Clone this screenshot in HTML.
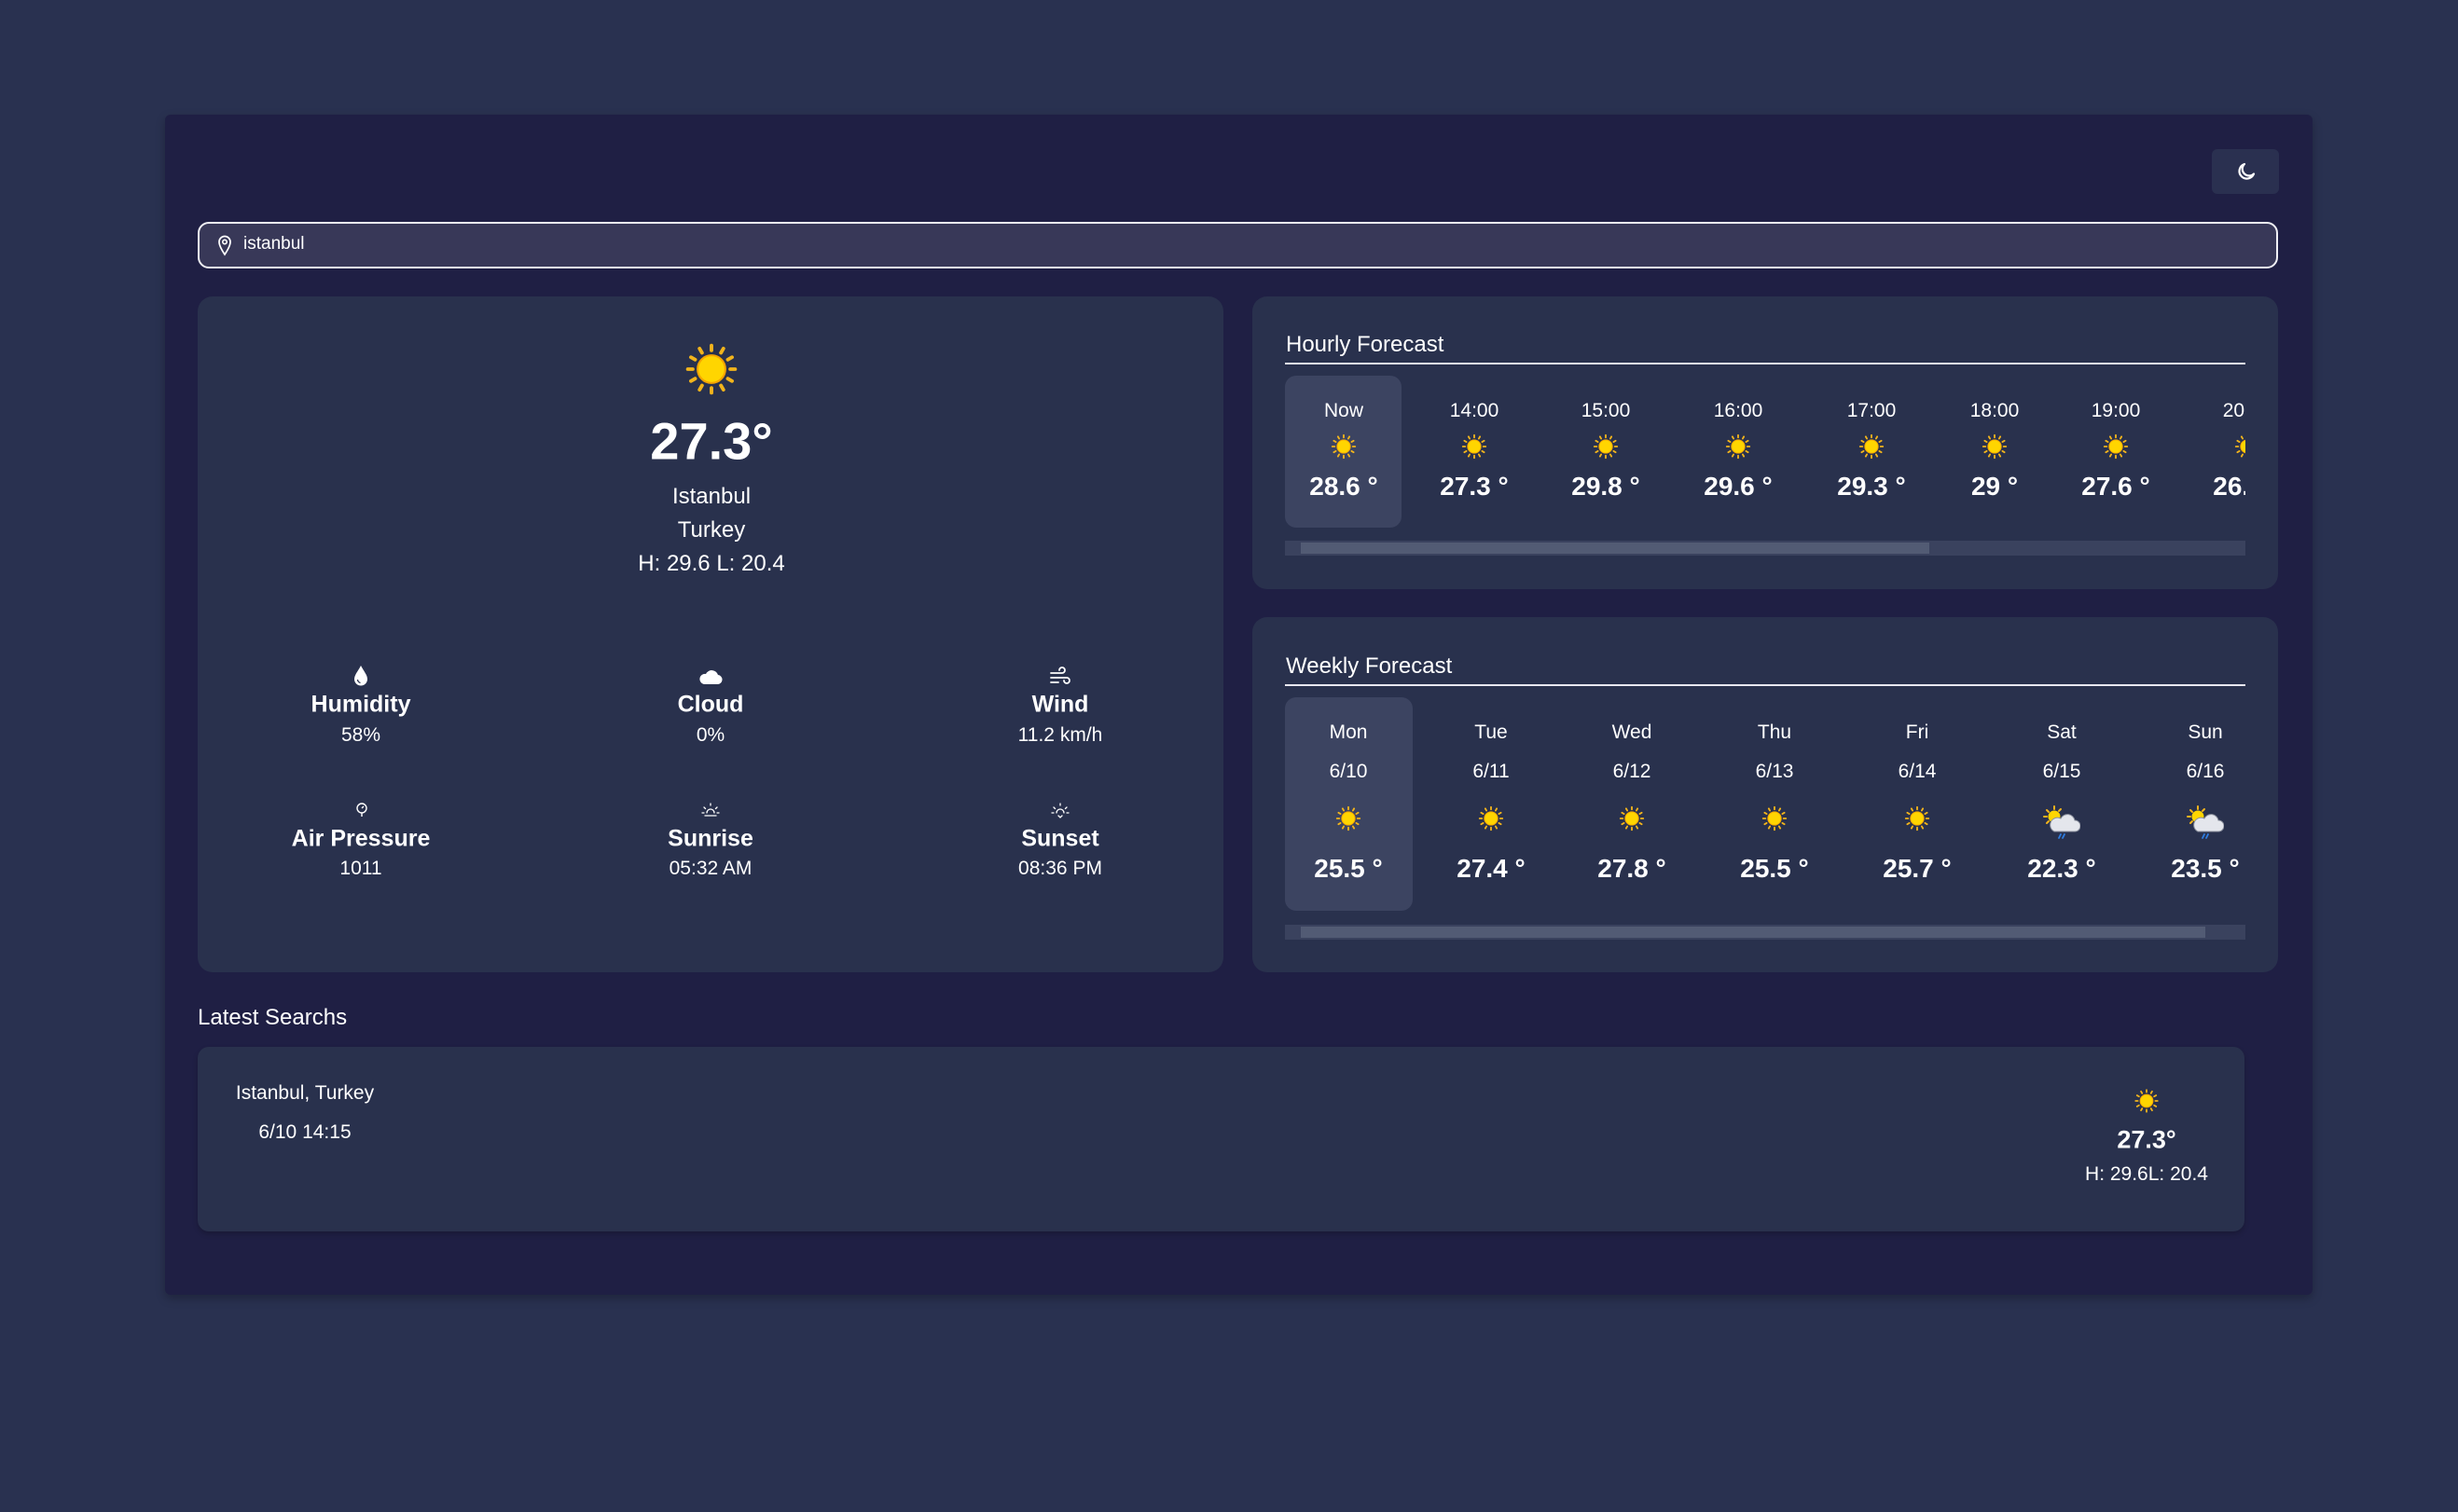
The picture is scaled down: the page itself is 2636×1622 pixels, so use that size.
<!DOCTYPE html>
<html><head><meta charset="utf-8"><style>
*{box-sizing:border-box;margin:0;padding:0}
html,body{width:2636px;height:1622px;overflow:hidden}
body{background:#293150;font-family:"Liberation Sans",sans-serif;color:#fff;position:relative}
.abs{position:absolute}
.c{position:absolute;transform:translate(-50%,-50%);white-space:nowrap;text-align:center}
.card{position:absolute;background:#29314d;border-radius:16px}
.t{font-size:21px}
.b{font-weight:bold}
</style></head><body>
<svg width="0" height="0" style="position:absolute">
<defs>
<symbol id="sun" viewBox="0 0 32 32">
<g stroke="#f2b41c" stroke-width="2.2" stroke-linecap="round">
<line x1="16" y1="1.5" x2="16" y2="4.5"/><line x1="16" y1="27.5" x2="16" y2="30.5"/>
<line x1="1.5" y1="16" x2="4.5" y2="16"/><line x1="27.5" y1="16" x2="30.5" y2="16"/>
<line x1="8.7" y1="3.4" x2="10.2" y2="6"/><line x1="21.8" y1="26" x2="23.3" y2="28.6"/>
<line x1="23.3" y1="3.4" x2="21.8" y2="6"/><line x1="10.2" y1="26" x2="8.7" y2="28.6"/>
<line x1="3.4" y1="8.7" x2="6" y2="10.2"/><line x1="26" y1="21.8" x2="28.6" y2="23.3"/>
<line x1="3.4" y1="23.3" x2="6" y2="21.8"/><line x1="26" y1="10.2" x2="28.6" y2="8.7"/>
</g>
<circle cx="16" cy="16" r="8.5" fill="#ffd500" stroke="#f5a500" stroke-width="1.2"/>
</symbol>
<symbol id="rain" viewBox="0 0 40 36">
<g stroke="#f2b41c" stroke-width="2" stroke-linecap="round">
<line x1="12" y1="1" x2="12" y2="4"/><line x1="4" y1="5" x2="6" y2="7"/><line x1="1" y1="12" x2="4" y2="12"/><line x1="4" y1="19" x2="6" y2="17"/><line x1="19" y1="4" x2="17" y2="6"/>
</g>
<circle cx="12" cy="12" r="6.5" fill="#ffd500"/>
<path d="M12 28 h22 a6 6 0 0 0 0-12 a8 8 0 0 0-15-2 a6 6 0 0 0-7 14z" fill="#e4e6ec" stroke="#8a8f9c" stroke-width="1"/>
<g stroke="#2f7de0" stroke-width="1.8" stroke-linecap="round"><line x1="19" y1="31" x2="17" y2="35"/><line x1="23" y1="31" x2="21" y2="35"/></g>
</symbol>
</defs></svg>

<div class="abs" style="left:177px;top:123px;width:2303px;height:1266px;background:#1f1f44;border-radius:6px;box-shadow:0 4px 10px rgba(0,0,0,.25)"></div>

<div class="abs" style="left:2372px;top:160px;width:72px;height:48px;background:#2a3050;border-radius:6px"></div>
<svg class="abs" style="left:2397px;top:172px" width="24" height="24" viewBox="0 0 24 24"><path d="M20 14.5A8 8 0 1 1 10 4a6.5 6.5 0 0 0 10 10.5z" fill="none" stroke="#fff" stroke-width="2.2" stroke-linejoin="round"/></svg>

<div class="abs" style="left:212px;top:238px;width:2231px;height:50px;background:#383858;border:2px solid #f0f0f5;border-radius:12px"></div>
<svg class="abs" style="left:233px;top:251px" width="16" height="24" viewBox="0 0 16 24"><path d="M8 22 C4 16 2 12 2 8.5 A6 6 0 0 1 14 8.5 C14 12 12 16 8 22z" fill="none" stroke="#fff" stroke-width="1.7"/><circle cx="8" cy="8.5" r="2.2" fill="none" stroke="#fff" stroke-width="1.6"/></svg>
<div class="abs" style="left:261px;top:251px;font-size:19px">istanbul</div>

<!-- left card -->
<div class="card" style="left:212px;top:318px;width:1100px;height:725px"></div>
<svg class="c" style="left:763px;top:396px" width="56" height="56"><use href="#sun"/></svg>
<div class="c b" style="left:763px;top:473px;font-size:56px">27.3°</div>
<div class="c" style="left:763px;top:533px;font-size:24px">Istanbul</div>
<div class="c" style="left:763px;top:569px;font-size:24px">Turkey</div>
<div class="c" style="left:763px;top:605px;font-size:24px">H: 29.6 L: 20.4</div>

<svg class="c" style="left:387px;top:725px" width="18" height="24" viewBox="0 0 18 24"><path d="M9 1 C6 7 2 11 2 15.5 A7 7 0 0 0 16 15.5 C16 11 12 7 9 1z" fill="#fff"/><path d="M5.5 16a4 4 0 0 0 3 3.5" stroke="#29314d" stroke-width="1.3" fill="none"/></svg>
<div class="c b" style="left:387px;top:756px;font-size:25px">Humidity</div>
<div class="c t" style="left:387px;top:789px">58%</div>
<svg class="c" style="left:762px;top:726px" width="26" height="20" viewBox="0 0 26 20"><path d="M6 18h14a5 5 0 0 0 1-10 a7 7 0 0 0-13-1 a5.5 5.5 0 0 0-2 11z" fill="#fff"/></svg>
<div class="c b" style="left:762px;top:756px;font-size:25px">Cloud</div>
<div class="c t" style="left:762px;top:789px">0%</div>
<svg class="c" style="left:1137px;top:726px" width="24" height="22" viewBox="0 0 24 22" fill="none" stroke="#fff" stroke-width="1.8" stroke-linecap="round"><path d="M2 7h12a3 3 0 1 0-3-3"/><path d="M2 12h17a3 3 0 1 1-3 3"/><path d="M2 17h8"/></svg>
<div class="c b" style="left:1137px;top:756px;font-size:25px">Wind</div>
<div class="c t" style="left:1137px;top:789px">11.2 km/h</div>

<svg class="c" style="left:388px;top:869px" width="14" height="16" viewBox="0 0 14 16" fill="none" stroke="#fff" stroke-width="1.4"><circle cx="7" cy="6" r="5"/><path d="M7 6l2-2M7 11v4"/></svg>
<div class="c b" style="left:387px;top:900px;font-size:25px">Air Pressure</div>
<div class="c t" style="left:387px;top:932px">1011</div>
<svg class="c" style="left:762px;top:869px" width="20" height="18" viewBox="0 0 20 18" fill="none" stroke="#fff" stroke-width="1.3" stroke-linecap="round"><path d="M6 12a4 4 0 0 1 8 0M10 2v2M3 6l1.5 1.5M17 6l-1.5 1.5M1 12h2M17 12h2M4 15h12"/></svg>
<div class="c b" style="left:762px;top:900px;font-size:25px">Sunrise</div>
<div class="c t" style="left:762px;top:932px">05:32 AM</div>
<svg class="c" style="left:1137px;top:869px" width="20" height="18" viewBox="0 0 20 18" fill="none" stroke="#fff" stroke-width="1.3" stroke-linecap="round"><path d="M6 12a4 4 0 0 1 8 0M10 2v2M3 6l1.5 1.5M17 6l-1.5 1.5M1 12h2M17 12h2M8 15l2 2 2-2"/></svg>
<div class="c b" style="left:1137px;top:900px;font-size:25px">Sunset</div>
<div class="c t" style="left:1137px;top:932px">08:36 PM</div>

<!-- hourly -->
<div class="card" style="left:1343px;top:318px;width:1100px;height:314px"></div>
<div class="abs" style="left:1379px;top:356px;font-size:24px">Hourly Forecast</div>
<div class="abs" style="left:1378px;top:389px;width:1030px;height:2px;background:#e8e8f0"></div>
<div class="abs" style="left:1378px;top:403px;width:125px;height:163px;background:#3c4461;border-radius:12px"></div>
<div class="abs" style="left:1378px;top:403px;width:1030px;height:163px;overflow:hidden">
<div style="position:relative;left:-1378px;top:-403px;width:2636px;height:600px">
<div class="c t" style="left:1441px;top:441px">Now</div><svg class="c" style="left:1441px;top:479px" width="27" height="27"><use href="#sun"/></svg><div class="c b" style="left:1441px;top:522px;font-size:28px">28.6 °</div>
<div class="c t" style="left:1581px;top:441px">14:00</div><svg class="c" style="left:1581px;top:479px" width="27" height="27"><use href="#sun"/></svg><div class="c b" style="left:1581px;top:522px;font-size:28px">27.3 °</div>
<div class="c t" style="left:1722px;top:441px">15:00</div><svg class="c" style="left:1722px;top:479px" width="27" height="27"><use href="#sun"/></svg><div class="c b" style="left:1722px;top:522px;font-size:28px">29.8 °</div>
<div class="c t" style="left:1864px;top:441px">16:00</div><svg class="c" style="left:1864px;top:479px" width="27" height="27"><use href="#sun"/></svg><div class="c b" style="left:1864px;top:522px;font-size:28px">29.6 °</div>
<div class="c t" style="left:2007px;top:441px">17:00</div><svg class="c" style="left:2007px;top:479px" width="27" height="27"><use href="#sun"/></svg><div class="c b" style="left:2007px;top:522px;font-size:28px">29.3 °</div>
<div class="c t" style="left:2139px;top:441px">18:00</div><svg class="c" style="left:2139px;top:479px" width="27" height="27"><use href="#sun"/></svg><div class="c b" style="left:2139px;top:522px;font-size:28px">29 °</div>
<div class="c t" style="left:2269px;top:441px">19:00</div><svg class="c" style="left:2269px;top:479px" width="27" height="27"><use href="#sun"/></svg><div class="c b" style="left:2269px;top:522px;font-size:28px">27.6 °</div>
<div class="c t" style="left:2410px;top:441px">20:00</div><svg class="c" style="left:2410px;top:479px" width="27" height="27"><use href="#sun"/></svg><div class="c b" style="left:2410px;top:522px;font-size:28px">26.8 °</div>
</div></div>
<div class="abs" style="left:1378px;top:580px;width:1030px;height:16px;background:#3a425e"></div>
<div class="abs" style="left:1395px;top:582px;width:674px;height:12px;background:#525b74"></div>

<!-- weekly -->
<div class="card" style="left:1343px;top:662px;width:1100px;height:381px"></div>
<div class="abs" style="left:1379px;top:701px;font-size:24px">Weekly Forecast</div>
<div class="abs" style="left:1378px;top:734px;width:1030px;height:2px;background:#e8e8f0"></div>
<div class="abs" style="left:1378px;top:748px;width:137px;height:229px;background:#3c4461;border-radius:12px"></div>
<div class="c t" style="left:1446px;top:786px">Mon</div><div class="c t" style="left:1446px;top:828px">6/10</div><svg class="c" style="left:1446px;top:878px" width="27" height="27"><use href="#sun"/></svg><div class="c b" style="left:1446px;top:932px;font-size:28px">25.5 °</div>
<div class="c t" style="left:1599px;top:786px">Tue</div><div class="c t" style="left:1599px;top:828px">6/11</div><svg class="c" style="left:1599px;top:878px" width="27" height="27"><use href="#sun"/></svg><div class="c b" style="left:1599px;top:932px;font-size:28px">27.4 °</div>
<div class="c t" style="left:1750px;top:786px">Wed</div><div class="c t" style="left:1750px;top:828px">6/12</div><svg class="c" style="left:1750px;top:878px" width="27" height="27"><use href="#sun"/></svg><div class="c b" style="left:1750px;top:932px;font-size:28px">27.8 °</div>
<div class="c t" style="left:1903px;top:786px">Thu</div><div class="c t" style="left:1903px;top:828px">6/13</div><svg class="c" style="left:1903px;top:878px" width="27" height="27"><use href="#sun"/></svg><div class="c b" style="left:1903px;top:932px;font-size:28px">25.5 °</div>
<div class="c t" style="left:2056px;top:786px">Fri</div><div class="c t" style="left:2056px;top:828px">6/14</div><svg class="c" style="left:2056px;top:878px" width="27" height="27"><use href="#sun"/></svg><div class="c b" style="left:2056px;top:932px;font-size:28px">25.7 °</div>
<div class="c t" style="left:2211px;top:786px">Sat</div><div class="c t" style="left:2211px;top:828px">6/15</div><svg class="c" style="left:2211px;top:882px" width="40" height="36"><use href="#rain"/></svg><div class="c b" style="left:2211px;top:932px;font-size:28px">22.3 °</div>
<div class="c t" style="left:2365px;top:786px">Sun</div><div class="c t" style="left:2365px;top:828px">6/16</div><svg class="c" style="left:2365px;top:882px" width="40" height="36"><use href="#rain"/></svg><div class="c b" style="left:2365px;top:932px;font-size:28px">23.5 °</div>
<div class="abs" style="left:1378px;top:992px;width:1030px;height:16px;background:#3a425e"></div>
<div class="abs" style="left:1395px;top:994px;width:970px;height:12px;background:#525b74"></div>

<!-- latest searches -->
<div class="abs" style="left:212px;top:1078px;font-size:24px">Latest Searchs</div>
<div class="card" style="left:212px;top:1123px;width:2195px;height:198px;border-radius:12px;box-shadow:0 3px 6px rgba(0,0,0,.2)"></div>
<div class="c t" style="left:327px;top:1173px">Istanbul, Turkey</div>
<div class="c t" style="left:327px;top:1215px">6/10 14:15</div>
<svg class="c" style="left:2302px;top:1181px" width="26" height="26"><use href="#sun"/></svg>
<div class="c b" style="left:2302px;top:1223px;font-size:27px">27.3°</div>
<div class="c t" style="left:2302px;top:1260px">H: 29.6L: 20.4</div>
</body></html>
